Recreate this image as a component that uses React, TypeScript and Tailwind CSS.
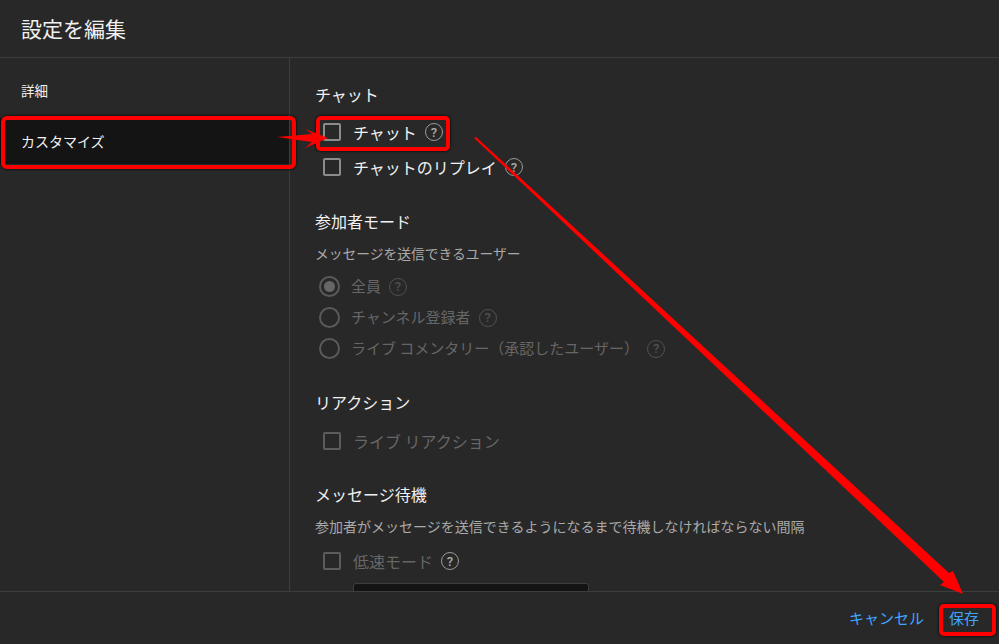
const jp = "font-['Noto_Sans_CJK_JP','Noto_Sans',sans-serif]";

function Help({ dim }: { dim?: boolean }) {
  return (
    <span
      className={`flex size-[18px] shrink-0 items-center justify-center rounded-full border-[1.5px] font-['Roboto',sans-serif] text-[13px] font-medium leading-none ${
        dim ? 'border-[#505050] text-[#505050]' : 'border-[#999999] text-[#aaaaaa]'
      }`}
    >
      ?
    </span>
  );
}

function CheckRow({ label, dim, helpDim, className = '' }: { label: string; dim?: boolean; helpDim?: boolean; className?: string }) {
  return (
    <div className={`flex h-[34px] items-center pl-2 ${className}`}>
      <span className={`size-[18px] shrink-0 rounded-[2px] border-2 ${dim ? 'border-[#5c5c5c]' : 'border-[#8c8c8c]'}`} />
      <span className={`ml-3 text-[16px] ${dim ? 'text-[#666666]' : 'text-[#f1f1f1]'}`}>{label}</span>
      {helpDim !== undefined && (
        <span className="ml-2">
          <Help dim={helpDim} />
        </span>
      )}
    </div>
  );
}

function RadioRow({ label, checked }: { label: string; checked?: boolean }) {
  return (
    <div className="flex h-[31px] items-center pl-1">
      <span className="flex size-[21px] shrink-0 items-center justify-center rounded-full border-2 border-[#5a5a5a]">
        {checked && <span className="size-[11px] rounded-full bg-[#666666]" />}
      </span>
      <span className="ml-[11px] text-[15px] text-[#666666]">{label}</span>
      <span className="ml-2">
        <Help dim />
      </span>
    </div>
  );
}

function Heading({ children, className = '' }: { children: string; className?: string }) {
  return <h3 className={`text-[16px] leading-[22px] text-[#f1f1f1] ${className}`}>{children}</h3>;
}

export default function App() {
  return (
    <div className={`relative flex h-[644px] w-[999px] flex-col overflow-hidden bg-[#282828] ${jp}`}>
      <header className="flex h-[58px] shrink-0 items-center border-b border-[#3d3d3d] pl-[21px]">
        <h1 className="text-[21px] text-[#f1f1f1]">設定を編集</h1>
      </header>

      <div className="flex min-h-0 flex-1">
        <nav className="w-[290px] shrink-0 border-r border-[#3d3d3d] pt-3">
          <div className="flex h-[40px] items-center pl-[21px] text-[13.5px] text-[#f1f1f1]">詳細</div>
          <div className="mt-2 flex h-[46px] items-center bg-[#141414] pl-[21px] text-[14px] text-[#f1f1f1]">カスタマイズ</div>
        </nav>

        <main className="min-w-0 flex-1 overflow-hidden pl-[25px] pt-[25px]">
          <Heading>チャット</Heading>
          <CheckRow label="チャット" helpDim={false} className="mt-[10px]" />
          <CheckRow label="チャットのリプレイ" helpDim={false} className="mt-px" />

          <Heading className="mt-[26px]">参加者モード</Heading>
          <p className="mt-[11px] text-[13.75px] leading-[20px] text-[#aaaaaa]">メッセージを送信できるユーザー</p>
          <div className="mt-2">
            <RadioRow label="全員" checked />
            <RadioRow label="チャンネル登録者" />
            <RadioRow label="ライブ コメンタリー（承認したユーザー）" />
          </div>

          <Heading className="mt-[27px]">リアクション</Heading>
          <CheckRow label="ライブ リアクション" dim className="mt-[11px]" />

          <Heading className="mt-[25px]">メッセージ待機</Heading>
          <p className="mt-[11px] text-[14px] leading-[20px] text-[#aaaaaa]">参加者がメッセージを送信できるようになるまで待機しなければならない間隔</p>
          <CheckRow label="低速モード" dim helpDim={false} className="mt-2" />
          <div className="ml-[38px] mt-[5px] h-[40px] w-[236px] rounded-[3px] border border-[#3d3d3d] bg-[#141414]" />
        </main>
      </div>

      <footer className="flex h-[53px] shrink-0 items-center justify-end gap-[25px] border-t border-[#3d3d3d] pr-[20px] text-[15px] text-[#3ea6ff]">
        <button>キャンセル</button>
        <button>保存</button>
      </footer>

      {/* annotations */}
      <div className="absolute left-[1px] top-[116px] h-[53px] w-[295px] rounded-[6px] border-4 border-[#ff0000] shadow-[0_0_3px_#000]" />
      <div className="absolute left-[316px] top-[116px] h-[35px] w-[134px] rounded-[5px] border-4 border-[#ff0000] shadow-[0_0_3px_#000]" />
      <div className="absolute left-[939px] top-[604px] h-[32px] w-[57px] rounded-[5px] border-4 border-[#ff0000] shadow-[0_0_3px_#000]" />
      <svg className="pointer-events-none absolute left-0 top-0" width="999" height="644" viewBox="0 0 999 644">
        <polygon points="277,137 312,134 305,129 328,138 305,148 312,142" fill="#ff0000" />
        <polygon points="474,138 476,137 949,573 953,571 963,594 940,585 944,582" fill="#ff0000" />
      </svg>
    </div>
  );
}
